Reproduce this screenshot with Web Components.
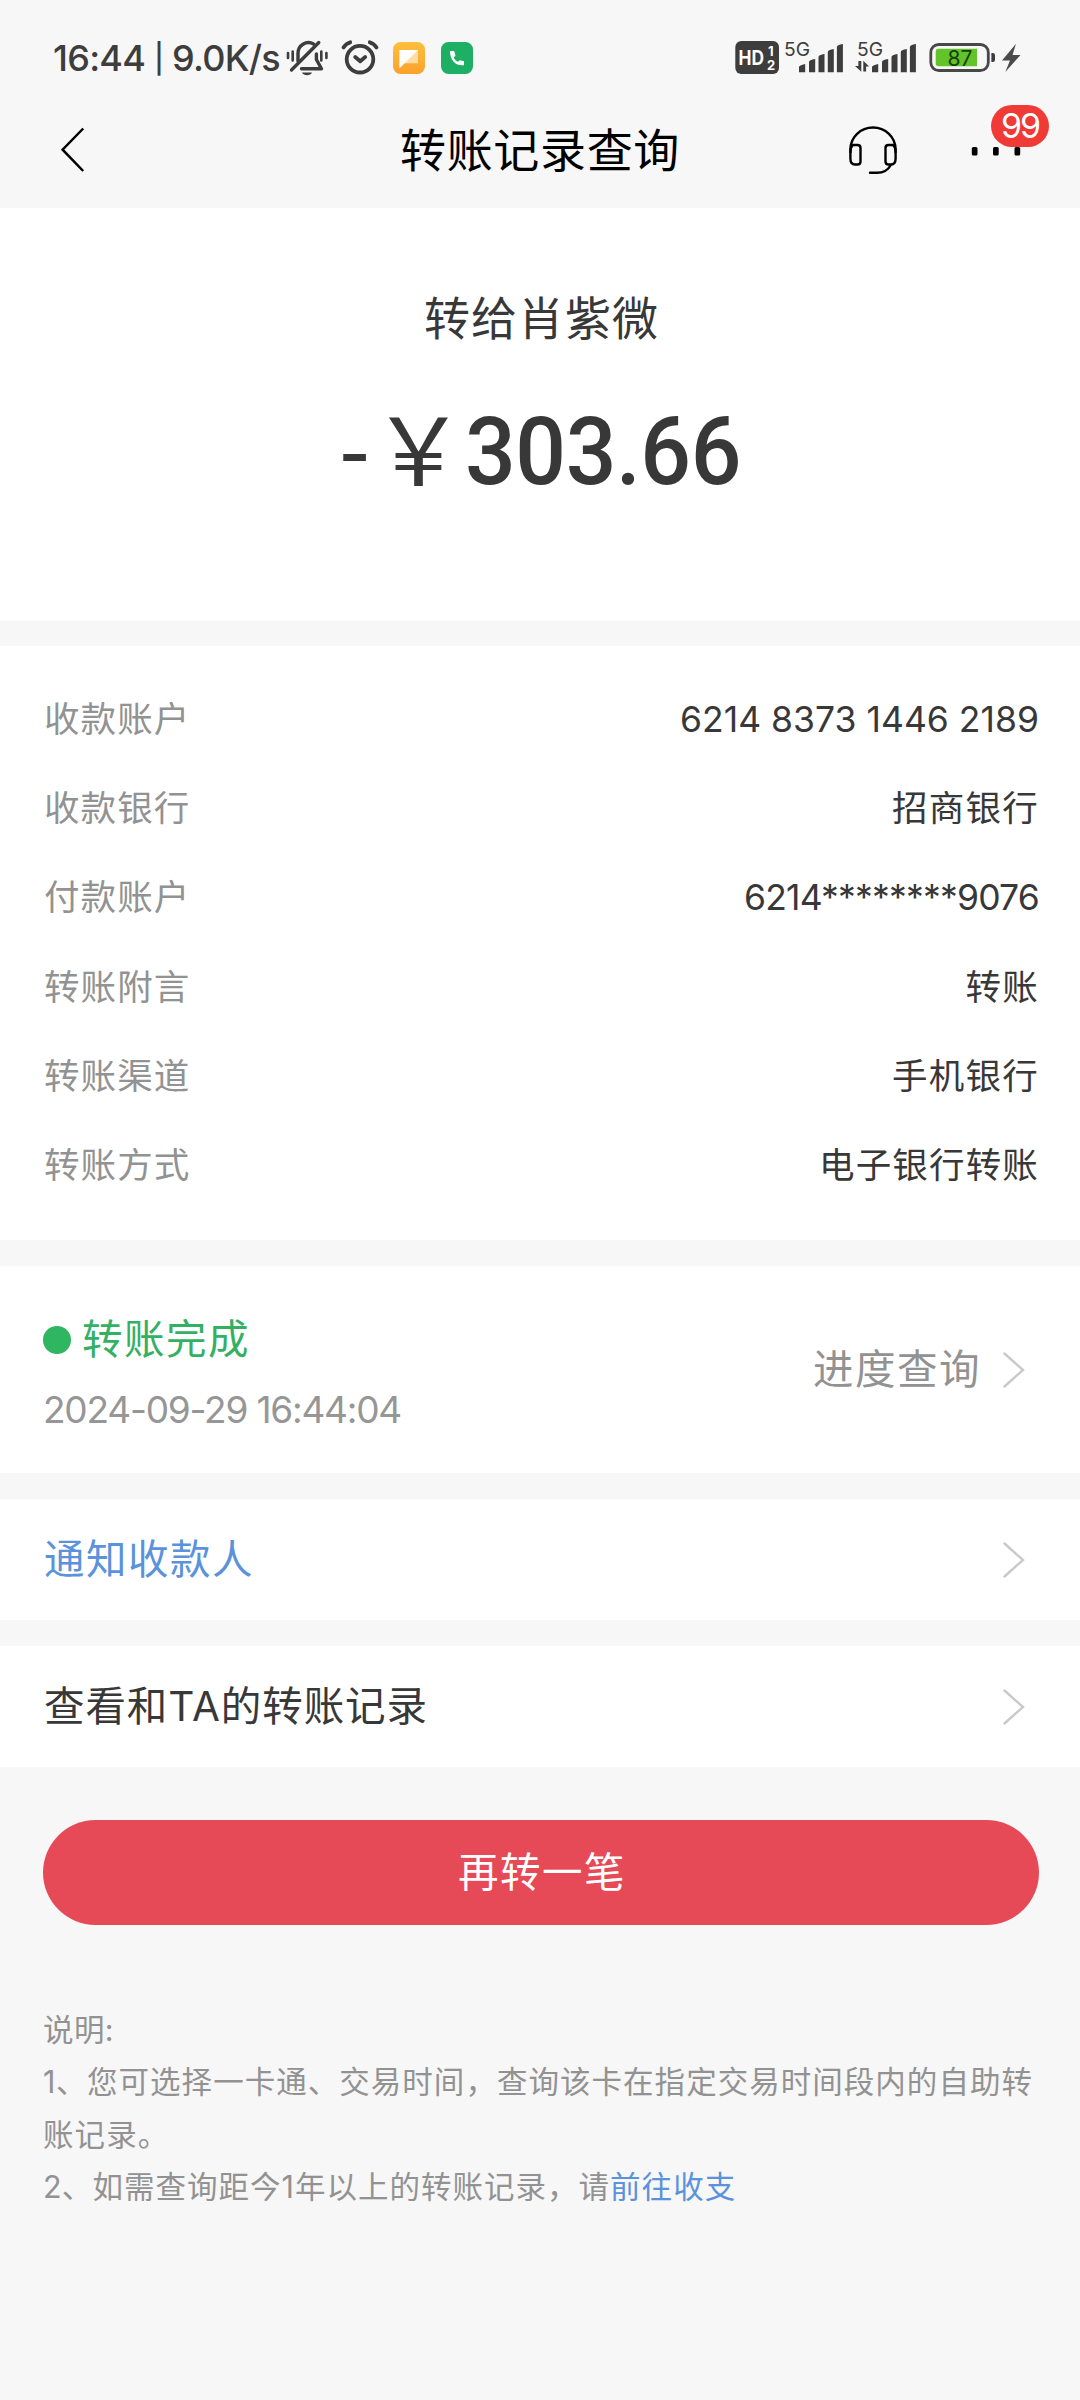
<!DOCTYPE html>
<html lang="zh-CN">
<head>
<meta charset="utf-8">
<title>转账记录查询</title>
<style>
body{margin:0;background:#f7f7f7;color:#383838;font-family:Inter,"Noto Sans CJK SC",sans-serif;width:1080px;min-height:2400px}
</style>
</head>
<body>
<transfer-page></transfer-page>
<script>
const define = (name, html, setup) => {
  const template = document.createElement('template');
  template.innerHTML = html;
  customElements.define(name, class extends HTMLElement {
    constructor() {
      super();
      this.attachShadow({mode: 'open'}).append(template.content.cloneNode(true));
    }
    connectedCallback() { if (setup) setup(this, this.shadowRoot); }
  });
};

define('status-bar', `
<style>
:host{display:flex;height:90px;align-items:flex-start;color:#3d3d3d}
svg{display:block;height:90px;flex:none}
.clock{font-size:36px;font-weight:500;line-height:60px;padding:28px 0 0 53px}
.bar{font-size:29px;vertical-align:2px;line-height:1}
.grow{flex:1}
</style>
<div class="clock"><fit-text w="227">16:44 <span class="bar">|</span> 9.0K/s</fit-text></div>
<svg width="50" viewBox="280 0 50 90" fill="none" stroke="#3d3d3d" stroke-width="3.4" stroke-linecap="round" stroke-linejoin="round">
 <path d="M298 61V53.5a10.5 10.5 0 0 1 15.5-9.6"/><path d="M316.4 54v5.5l5.1 9.3H301.5"/><path d="M318.8 42.5 291.5 70"/>
 <path d="M302 72.6h10c-1.400 3.600-8.600 3.600-10 0z" fill="#3d3d3d" stroke="none"/>
 <path d="M288 53v5M292.700 51.500v9M321.300 51.500v9M326.400 53v5" stroke-width="2.600"/>
</svg>
<svg width="56" viewBox="330 0 56 90" fill="none" stroke="#3d3d3d" stroke-width="3.800" stroke-linecap="round" stroke-linejoin="round">
 <circle cx="360" cy="59.200" r="13.300"/><path d="M355.200 57 360.200 61.200 365.200 57"/>
 <path d="M343.500 47.500q2.500-4 6.700-5.200M369.800 42.300q4.200 1.200 6.700 5.200"/>
</svg>
<svg width="48" viewBox="386 0 48 90">
 <defs><linearGradient id="o" x1="0" y1="0" x2="0" y2="1"><stop offset="0" stop-color="#fdbf3d"/><stop offset="1" stop-color="#fba12c"/></linearGradient></defs>
 <rect x="393" y="42" width="32" height="32" rx="7.500" fill="url(#o)"/>
 <path d="M399.500 50H418v13.300h-13.500l-5 5z" fill="#ffdda6"/><path d="M399.500 50H418L399.500 68.300z" fill="#fff"/>
</svg>
<svg width="48" viewBox="434 0 48 90">
 <rect x="441" y="42" width="32" height="32" rx="7.500" fill="#1db065"/>
 <path d="M450 51h4.200l1.300 4.800-1.900 1.700c1 2 2.200 3.200 4.200 4.200l2-1.400 4.200.9v4.100c-8.200.7-14-4.700-14-14.300z" fill="#fff"/>
</svg>
<div class="grow"></div>
<svg width="350" viewBox="730 0 350 90" font-family="Inter" fill="#3d3d3d">
 <rect x="735.300" y="41" width="43.700" height="33" rx="6"/>
 <g fill="#fff" font-weight="700"><text x="738.500" y="65" font-size="20" textLength="25.500" lengthAdjust="spacingAndGlyphs">HD</text>
 <text x="768" y="55.800" font-size="13">1</text><text x="767" y="70" font-size="13">2</text></g>
 <text x="784" y="56" font-size="19" textLength="26" lengthAdjust="spacingAndGlyphs">5G</text>
 <text x="857" y="56" font-size="19" textLength="26" lengthAdjust="spacingAndGlyphs">5G</text>
 <path d="M799 72.300V67q0-1.500 6.200-3v8.300zM809 72.300V62q0-2 6.200-3v13.300zM818.500 72.300V57q0-2 6-3v18.300zM827.800 72.300V52q0-2 6-3v23.300zM836.900 72.300V47q0-2 6-3v28.300z"/>
 <path d="M872 72.300V67q0-1.500 6.200-3v8.300zM882 72.300V62q0-2 6.200-3v13.300zM891.500 72.300V57q0-2 6-3v18.300zM900.800 72.300V52q0-2 6-3v23.300zM909.900 72.300V47q0-2 6-3v28.300z"/>
 <path d="M861.300 61v10.800l-6.300-5.800h3.400V61zM863.300 71.500V60.700l5.800 5.800h-3v5z"/>
 <rect x="930.800" y="44.500" width="57.500" height="26" rx="8" fill="none" stroke="#484848" stroke-width="2.800"/>
 <path d="M991.400 53h1.300q2.300 0 2.300 2.300v4.400q0 2.300-2.300 2.300h-1.300z"/>
 <path d="M938.700 48.700H977v17.600h-38.300q-3 0-3-3V51.700q0-3 3-3z" fill="#62c428"/>
 <text x="947.500" y="65.500" font-size="21.500" fill="#184010" textLength="25" lengthAdjust="spacingAndGlyphs">87</text>
 <path d="M1016 43.700 1002 60.500h8L1005.300 72 1020.500 55h-8z" fill="#4a4a4a"/>
</svg>`);

define('nav-bar', `
<style>
:host{display:grid;grid-template-columns:400px 278px 402px;height:118px;align-items:center;color:#000}
.title{font-size:46px;line-height:60px;padding-top:1px}
svg{display:block}
.actions{position:relative;height:118px}
.badge{position:absolute;left:313px;top:15px;width:58px;height:42px;border-radius:21px;background:#f03a36;color:#fff;font-size:34px;line-height:42px;display:flex;justify-content:center}
</style>
<svg width="400" height="118" viewBox="0 90 400 118" fill="none" stroke="#000" stroke-width="2.500"><path d="M83.200 128.500 62.600 149.700 83.200 171"/></svg>
<div class="title"><fit-text w="280"><slot></slot></fit-text></div>
<div class="actions">
<svg width="402" height="118" viewBox="678 90 402 118" fill="none" stroke="#000" stroke-width="2.400" stroke-linecap="round">
 <path d="M850.500 152v-3a22.500 21.500 0 0 1 45 0v3"/>
 <path d="M853 145h4.500q3 0 3 3v13.500q0 3-3 3H855q-4.600 0-4.600-6V151q0-4 2.600-6zM893 145h-4.500q-3 0-3 3v13.500q0 3 3 3H891q4.600 0 4.600-6V151q0-4-2.600-6z"/>
 <path d="M890.500 165.500q-4 7.300-13.500 7.300h-7"/>
 <g fill="#000" stroke="none"><rect x="971.800" y="147" width="5.700" height="8.500" rx="1.500"/><rect x="993" y="147" width="5.700" height="8.500" rx="1.500"/><rect x="1014.500" y="147" width="5.700" height="8.500" rx="1.500"/></g>
</svg>
<div class="badge"><fit-text w="38">99</fit-text></div>
</div>`);

define('amount-panel', `
<style>
:host{display:flex;flex-direction:column;align-items:center;height:413px;background:#fff;box-sizing:border-box;padding-top:80px}
.who{font-size:46px;line-height:60px;margin-left:3px}
.sum{display:flex;align-items:flex-start;height:110px;margin-top:48px;font:500 95px/110px Roboto,sans-serif;margin-right:1px}
.minus{font-weight:400;padding:3px 0 0 3px}
.yen{font:400 94px/110px "Noto Sans CJK SC",sans-serif;margin-top:-6px}
.num{padding-top:1px}
</style>
<div class="who"><fit-text w="235">转给肖紫微</fit-text></div>
<div class="sum"><fit-text w="30" class="minus">-</fit-text><fit-text w="93" class="yen">￥</fit-text><fit-text w="276" sx=".94" class="num">303.66</fit-text></div>`);

define('detail-row', `
<style>
:host{display:flex;justify-content:space-between;align-items:center;height:89.200px;font-size:35.500px;line-height:60px}
.k{color:#929292}
</style>
<fit-text class="k" w="146.500"></fit-text><fit-text class="v"></fit-text>`, (el, root) => {
  root.querySelector('.k').textContent = el.getAttribute('label');
  const v = root.querySelector('.v');
  v.textContent = el.getAttribute('value');
  v.setAttribute('w', el.getAttribute('w'));
});

define('page-section', `
<style>:host{display:block;background:#fff;margin-top:26px;padding:0 41px 0 44px;box-sizing:border-box}</style><slot></slot>`);

define('arrow-icon', `
<style>:host{display:block}svg{display:block}</style>
<svg width="22" height="36" viewBox="0 0 22 36" fill="none" stroke="#c9c9c9" stroke-width="2.400" stroke-linecap="round"><path d="M1.500 1.500 20 18 1.500 34.500"/></svg>`);

define('transfer-status', `
<style>
:host{display:flex;justify-content:space-between;height:207px;padding-right:14px}
.left{padding-top:44px}
.state{display:flex;align-items:center;font-size:40.500px;line-height:60px;color:#34b063;height:60px}
.dot{width:28px;height:28px;border-radius:50%;background:#2fb660;margin:0 11px 0 -1px}
.time{font-size:37px;line-height:60px;color:#969696;margin:10px 0 0 -1px}
.right{display:flex;align-items:center;font-size:40.500px;line-height:60px;color:#929292;gap:22px;height:207px}
</style>
<div class="left"><div class="state"><span class="dot"></span><fit-text w="168">转账完成</fit-text></div>
<div class="time"><fit-text w="358">2024-09-29 16:44:04</fit-text></div></div>
<div class="right"><fit-text w="168">进度查询</fit-text><arrow-icon></arrow-icon></div>`);

define('link-row', `
<style>
:host{display:flex;justify-content:space-between;align-items:center;height:121px;padding-right:14px;font-size:40.500px;line-height:60px}
</style>
<fit-text class="t"></fit-text><arrow-icon></arrow-icon>`, (el, root) => {
  const t = root.querySelector('.t');
  t.textContent = el.getAttribute('label');
  t.setAttribute('w', el.getAttribute('w'));
});

define('primary-button', `
<style>
:host{display:flex;justify-content:center;align-items:center;height:105px;margin:53px 41px 0 43px;border-radius:53px;background:#e64a57;color:#fff;font-size:40.500px;line-height:60px}
fit-text{margin-left:2px}
</style><fit-text w="168"><slot></slot></fit-text>`);

define('notes-block', `
<style>
:host{display:block;margin:79px 0 0 43px;font-size:30.500px;line-height:52.300px;color:#929292}
div{display:flex;height:52.300px}
.link{color:#5b92dc}
</style>
<div><fit-text w="71">说明:</fit-text></div>
<div><fit-text w="44">1、</fit-text><fit-text w="946">您可选择一卡通、交易时间，查询该卡在指定交易时间段内的自助转</fit-text></div>
<div><fit-text w="126.500">账记录。</fit-text></div>
<div><fit-text w="49.500">2、</fit-text><fit-text w="517.500">如需查询距今1年以上的转账记录，请</fit-text><fit-text class="link" w="126.500">前往收支</fit-text></div>`);

define('transfer-page', `
<style>:host{display:block}</style>
<status-bar></status-bar>
<nav-bar>转账记录查询</nav-bar>
<amount-panel></amount-panel>
<page-section style="padding-top:29.500px;height:594px;margin-top:25px">
 <detail-row label="收款账户" value="6214 8373 1446 2189" w="359"></detail-row>
 <detail-row label="收款银行" value="招商银行" w="147"></detail-row>
 <detail-row label="付款账户" value="6214********9076" w="295"></detail-row>
 <detail-row label="转账附言" value="转账" w="73.500"></detail-row>
 <detail-row label="转账渠道" value="手机银行" w="147"></detail-row>
 <detail-row label="转账方式" value="电子银行转账" w="220"></detail-row>
</page-section>
<page-section><transfer-status></transfer-status></page-section>
<page-section><link-row label="通知收款人" w="210" style="color:#5b92dc"></link-row></page-section>
<page-section><link-row label="查看和TA的转账记录" w="384"></link-row></page-section>
<primary-button>再转一笔</primary-button>
<notes-block></notes-block>`);

// Spreads a line of text over a fixed width by adjusting its tracking.
define('fit-text', `<style>:host{display:flex;flex:none}span{display:block;flex:none;white-space:pre;transform-origin:0 50%}</style><span><slot></slot></span>`, (el, root) => {
  const target = parseFloat(el.getAttribute('w'));
  const stretch = parseFloat(el.getAttribute('sx') || 1);
  const span = root.querySelector('span');
  const text = root.querySelector('slot').assignedNodes({flatten: true}).map(n => n.textContent).join('');
  const natural = span.getBoundingClientRect().width;
  if (!text.length || !natural) return;
  span.style.letterSpacing = (target / stretch - natural) / text.length + 'px';
  if (stretch !== 1) span.style.transform = 'scaleX(' + stretch + ')';
  el.style.width = target + 'px';
});
</script>
</body>
</html>
